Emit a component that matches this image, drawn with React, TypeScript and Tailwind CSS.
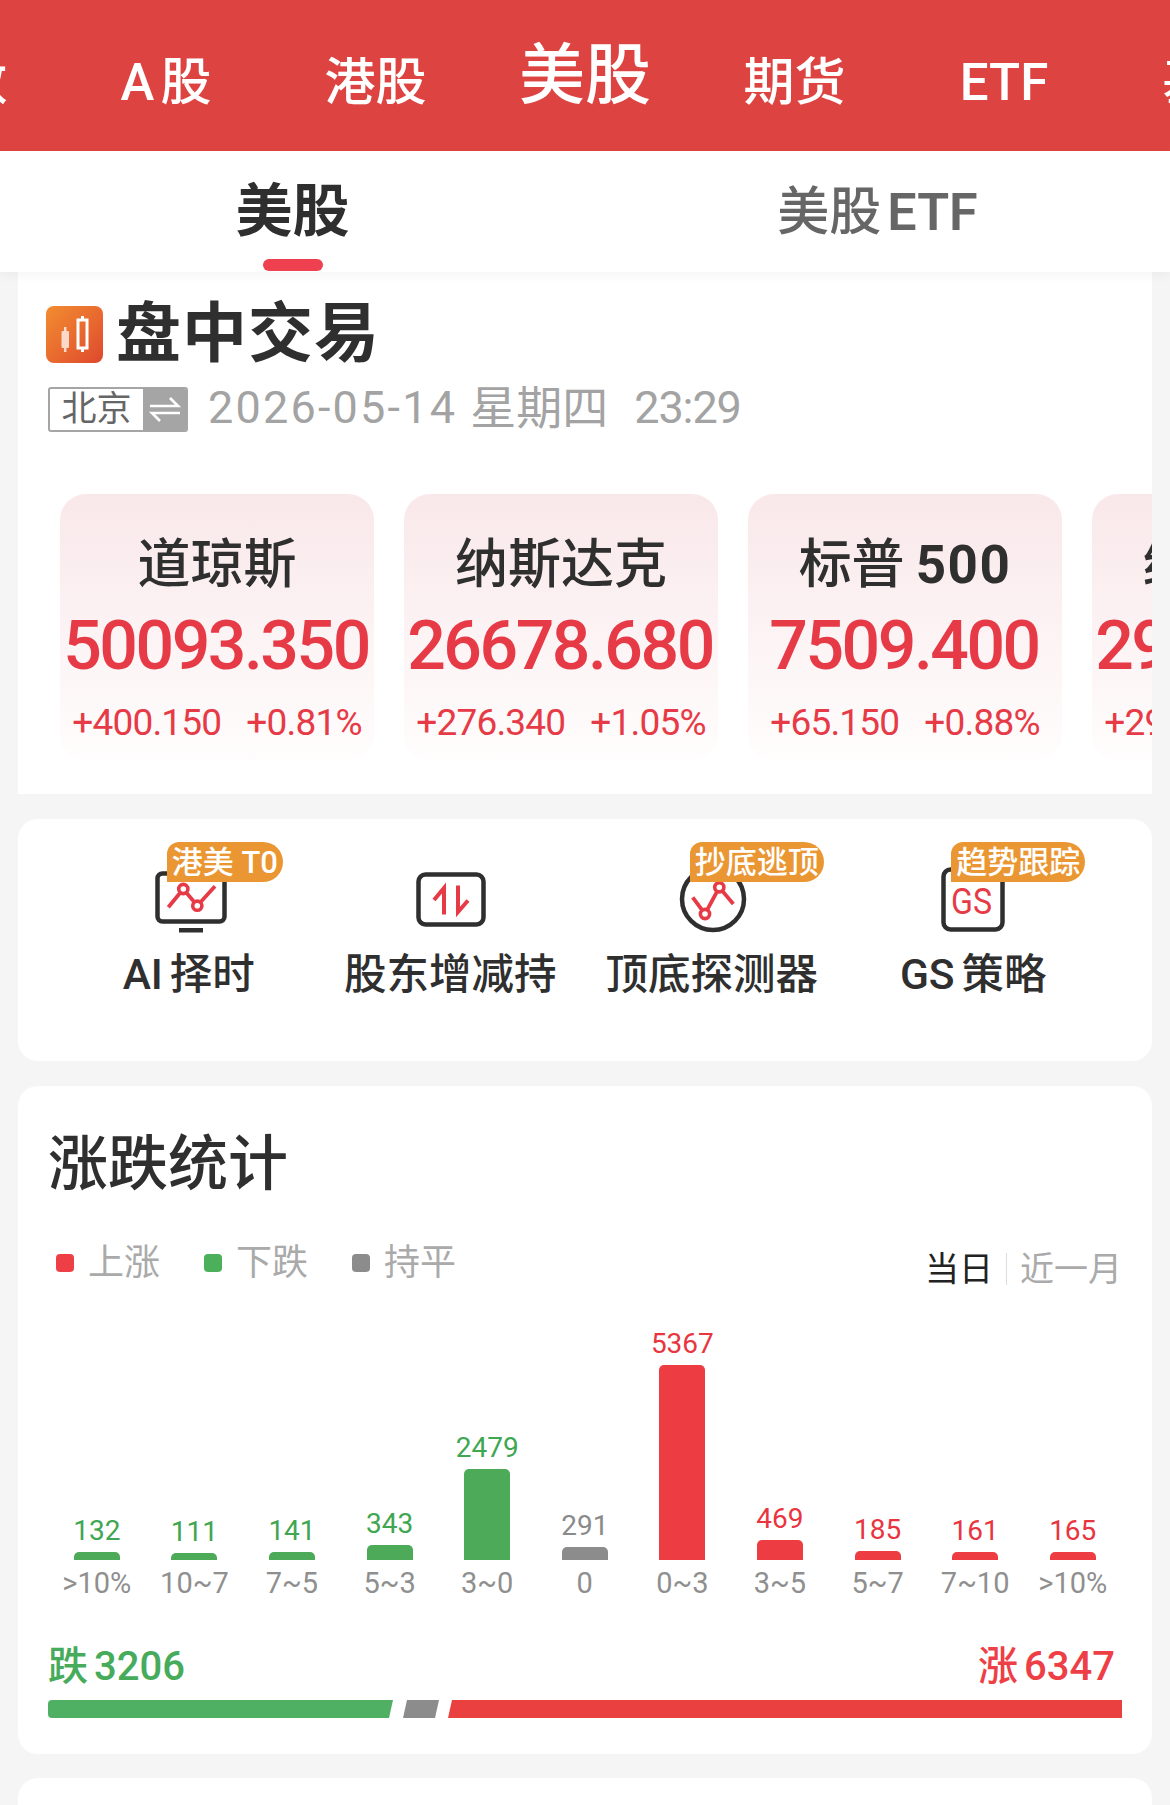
import React from "react";

const FONT = "font-['Roboto','Noto_Sans_CJK_SC',sans-serif]";
const RED = "#e63b47";
const DARK = "#2f2f2f";

const navItems = ["指数", "A股", "港股", "美股", "期货", "ETF", "基金"];

const indices = [
  { name: "道琼斯", latin: "", value: "50093.350", change: "+400.150", pct: "+0.81%" },
  { name: "纳斯达克", latin: "", value: "26678.680", change: "+276.340", pct: "+1.05%" },
  { name: "标普", latin: "500", value: "7509.400", change: "+65.150", pct: "+0.88%" },
  { name: "纳指", latin: "100", value: "29178.350", change: "+290.150", pct: "+1.00%" },
];

const bars = [
  { v: 132, h: 8, l: ">10%", c: "g" },
  { v: 111, h: 7, l: "10~7", c: "g" },
  { v: 141, h: 8, l: "7~5", c: "g" },
  { v: 343, h: 15, l: "5~3", c: "g" },
  { v: 2479, h: 91, l: "3~0", c: "g" },
  { v: 291, h: 13, l: "0", c: "n" },
  { v: 5367, h: 195, l: "0~3", c: "r" },
  { v: 469, h: 20, l: "3~5", c: "r" },
  { v: 185, h: 9, l: "5~7", c: "r" },
  { v: 161, h: 8, l: "7~10", c: "r" },
  { v: 165, h: 8, l: ">10%", c: "r" },
];

function Svg({ children }: { children: React.ReactNode }) {
  return (
    <svg width="80" height="70" viewBox="0 0 80 70" fill="none" className="block">
      {children}
    </svg>
  );
}

function Dot({ x, y }: { x: number; y: number }) {
  return <circle cx={x} cy={y} r="4.6" fill="#fff" stroke={RED} strokeWidth="3.6" />;
}

function MonitorIcon() {
  return (
    <Svg>
      <rect x="8.5" y="9.5" width="67" height="48" rx="5" stroke={DARK} strokeWidth="4.5" />
      <rect x="30" y="64" width="24" height="4.5" fill={DARK} />
      <polyline points="19.3,43.3 34.3,25 48.3,41.7 66,22.3" stroke={RED} strokeWidth="3.8" />
      <Dot x={34.3} y={25} />
      <Dot x={48.3} y={41.7} />
    </Svg>
  );
}

function SwapIcon() {
  return (
    <Svg>
      <rect x="8.5" y="10.5" width="65" height="50" rx="7" stroke={DARK} strokeWidth="4.5" />
      <polyline points="34,50.5 34,24 24,36" stroke={RED} strokeWidth="4" />
      <polyline points="48,21.5 48,48 58,36.5" stroke={RED} strokeWidth="4" />
    </Svg>
  );
}

function CircleIcon() {
  return (
    <Svg>
      <circle cx="41" cy="35" r="31" stroke={DARK} strokeWidth="4.5" />
      <polyline points="20.7,33.3 33,50 47.3,23.3 61.3,40" stroke={RED} strokeWidth="3.8" />
      <Dot x={33} y={50} />
      <Dot x={47.3} y={23.3} />
    </Svg>
  );
}

function GsIcon() {
  return (
    <Svg>
      <rect x="10.5" y="5.5" width="59" height="60" rx="7" stroke={DARK} strokeWidth="4.5" />
      <text
        x="18"
        y="50"
        fontSize="37"
        textLength={41}
        lengthAdjust="spacingAndGlyphs"
        fill={RED}
        fontFamily="Roboto, sans-serif"
      >
        GS
      </text>
    </Svg>
  );
}

const tools = [
  { latin: "AI", label: "择时", badge: "港美 T0", icon: <MonitorIcon /> },
  { latin: "", label: "股东增减持", badge: "", icon: <SwapIcon /> },
  { latin: "", label: "顶底探测器", badge: "抄底逃顶", icon: <CircleIcon /> },
  { latin: "GS", label: "策略", badge: "趋势跟踪", icon: <GsIcon /> },
];

function CandleLogo() {
  return (
    <div className="flex h-[57px] w-[57px] items-center justify-center rounded-[8px] bg-gradient-to-br from-[#f28c30] to-[#de472d]">
      <svg width="57" height="57" viewBox="0 0 57 57" fill="none">
        <rect x="15.5" y="25" width="7.5" height="17" rx="1" fill="#fbd9c8" />
        <path d="M19.2 21v25" stroke="#fbd9c8" strokeWidth="2.5" />
        <rect x="32" y="14" width="9" height="28" stroke="#fff" strokeWidth="3" />
        <path d="M36.5 10v4M36.5 42v4" stroke="#fff" strokeWidth="3" />
      </svg>
    </div>
  );
}

function IndexCard({ name, latin, value, change, pct }: (typeof indices)[number]) {
  return (
    <div className="flex h-[267px] w-[314px] shrink-0 flex-col items-center rounded-[26px] bg-gradient-to-b from-[#f9e8ea] to-[#fffdfd]">
      <div className="mt-[39px] flex h-[64px] items-center whitespace-nowrap text-[53px] leading-[64px] font-medium text-[#2f2f2f]">
        <span>{name}</span>
        {latin && <span className="ml-[11px] font-bold tracking-[1.5px]">{latin}</span>}
      </div>
      <div className="mt-[14px] h-[70px] -translate-x-[1px] whitespace-nowrap text-[68px] leading-[70px] font-medium tracking-[-2.5px] text-[#e63b47]">{value}</div>
      <div className="mt-[20px] flex h-[44px] items-center gap-[25px] whitespace-nowrap text-[37px] leading-[44px] tracking-[-0.8px] text-[#e63b47]">
        <span>{change}</span>
        <span>{pct}</span>
      </div>
    </div>
  );
}

export default function App() {
  return (
    <div className={`${FONT} h-[1805px] w-[1170px] overflow-hidden bg-[#f5f5f5]`}>
      <div className="flex h-[151px] items-center justify-center overflow-hidden bg-[#dd4340] pt-[15px] text-white">
        {navItems.map((t) => (
          <div
            key={t}
            className={
              t === "美股"
                ? "w-[209.5px] shrink-0 -translate-y-[7px] text-center text-[66px] leading-[80px] font-medium"
                : "w-[209.5px] shrink-0 text-center text-[51px] leading-[60px] font-medium"
            }
          >
            {t === "A股" ? (
              <>
                A<span className="ml-[6px]">股</span>
              </>
            ) : (
              t
            )}
          </div>
        ))}
      </div>

      <div className="relative z-10 grid h-[121px] grid-cols-2 bg-white shadow-[0_4px_10px_rgba(0,0,0,0.04)]">
        <div className="flex flex-col items-center">
          <div className="mt-[28px] text-[57px] leading-[66px] font-semibold text-[#2f2f2f]">美股</div>
          <div className="mt-auto mb-px h-[12px] w-[60px] rounded-[7px] bg-[#ef4050]" />
        </div>
        <div className="flex flex-col items-center">
          <div className="mt-[32px] flex text-[52px] leading-[60px] font-medium text-[#666666]">
            <span>美股</span>
            <span className="ml-[6px] font-semibold">ETF</span>
          </div>
        </div>
      </div>

      <div className="mx-[18px] h-[522px] overflow-hidden bg-white">
        <div className="flex items-center pt-[30px] pl-[28px]">
          <CandleLogo />
          <div className="ml-[13px] text-[65px] leading-[64px] font-semibold tracking-[1px] text-[#2f2f2f]">盘中交易</div>
        </div>
        <div className="mt-[18px] flex items-center pl-[30px]">
          <div className="flex h-[45px] w-[140px] overflow-hidden rounded-[3px] border-2 border-[#a5a5a5]">
            <div className="flex w-[93px] items-center justify-center text-[35px] leading-none text-[#666666]">北京</div>
            <div className="flex flex-1 items-center justify-center bg-[#a5a5a5]">
              <svg width="34" height="28" viewBox="0 0 34 28" fill="none" stroke="#fff" strokeWidth="2.6">
                <path d="M2 11h28L22 3" />
                <path d="M32 18H4l8 8" />
              </svg>
            </div>
          </div>
          <div className="ml-[20px] flex h-[50px] -translate-y-[1px] items-center text-[45px] leading-[50px] whitespace-nowrap text-[#a3a3a3]">
            <span className="tracking-[2.2px]">2026-05-14</span>
            <span className="ml-[13px] text-[46px]">星期四</span>
            <span className="ml-[26px] tracking-[-1.1px]">23:29</span>
          </div>
        </div>
        <div className="mt-[60px] flex gap-[30px] pl-[42px]">
          {indices.map((i) => (
            <IndexCard key={i.name} {...i} />
          ))}
        </div>
      </div>

      <div className="mx-[18px] mt-[25px] grid h-[242px] grid-cols-4 rounded-[20px] bg-white pt-[23px] pr-[48px] pl-[40px]">
        {tools.map((t) => (
          <div key={t.label} className="relative flex flex-col items-center">
            <div className="mt-[22px]">{t.icon}</div>
            {t.badge && (
              <div className="absolute top-0 left-[calc(50%-22px)] flex h-[40px] items-center rounded-tl-[12px] rounded-tr-[20px] rounded-br-[20px] bg-[#ea9632] px-[5px] text-[31px] leading-none font-medium whitespace-nowrap text-white">
                {t.badge}
              </div>
            )}
            <div className="mt-[13px] flex text-[42.5px] leading-[56px] font-medium whitespace-nowrap text-[#2f2f2f]">
              {t.latin && <span className="mr-[7px]">{t.latin}</span>}
              <span>{t.label}</span>
            </div>
          </div>
        ))}
      </div>

      <div className="mx-[18px] mt-[25px] h-[668px] rounded-[20px] bg-white px-[30px]">
        <div className="pt-[44px] text-[60px] leading-[70px] font-medium text-[#2f2f2f]">涨跌统计</div>
        <div className="mt-[39px] flex items-start justify-between">
          <div className="flex gap-[44px] pl-[8px] text-[36px] leading-[48px] text-[#aaaaaa]">
            {[
              ["上涨", "bg-[#ee3f47]"],
              ["下跌", "bg-[#4caf5a]"],
              ["持平", "bg-[#8c8c8c]"],
            ].map(([t, c]) => (
              <div key={t} className="flex items-center gap-[14px]">
                <span className={`h-[18px] w-[18px] rounded-[4px] ${c}`} />
                {t}
              </div>
            ))}
          </div>
          <div className="mt-[6px] flex items-center text-[34px] leading-[48px]">
            <span className="text-[#222222]">当日</span>
            <span className="mx-[13px] h-[32px] w-px bg-[#dddddd]" />
            <span className="text-[#aaaaaa]">近一月</span>
          </div>
        </div>

        <div className="mt-[7px] flex w-[1074px]">
          {bars.map((b, i) => (
            <div key={i} className="flex h-[300px] w-[97.6px] shrink-0 flex-col items-center justify-end">
              <div
                className={
                  "text-[28px] leading-[34px] " +
                  (b.c === "g" ? "text-[#3fa652]" : b.c === "r" ? "text-[#e8353f]" : "text-[#8a8a8a]")
                }
              >
                {b.v}
              </div>
              <div
                style={{ height: b.h }}
                className={
                  "mt-[4px] w-[46px] rounded-t-[5px] " +
                  (b.c === "g" ? "bg-[#4caa58]" : b.c === "r" ? "bg-[#ee3c43]" : "bg-[#8c8c8c]")
                }
              />
              <div className="mt-[6px] h-[34px] text-[29px] leading-[34px] whitespace-nowrap text-[#8f8f8f]">{b.l}</div>
            </div>
          ))}
        </div>

        <div className="mt-[42px] flex items-center justify-between pr-[7px] text-[40px] leading-[50px] font-medium">
          <span className="flex text-[#46ab5b]">
            跌<span className="ml-[6px]">3206</span>
          </span>
          <span className="flex text-[#ee3f47]">
            涨<span className="ml-[6px]">6347</span>
          </span>
        </div>
        <div className="mt-[8px] flex h-[18px]">
          <div className="w-[345px] rounded-l-[4px] bg-[#4fb063] [clip-path:polygon(0_0,100%_0,calc(100%-4px)_100%,0_100%)]" />
          <div className="ml-[10px] w-[36px] bg-[#8c8c8c] [clip-path:polygon(4px_0,100%_0,calc(100%-4px)_100%,0_100%)]" />
          <div className="ml-[9px] flex-1 bg-[#ea4140] [clip-path:polygon(4px_0,100%_0,100%_100%,0_100%)]" />
        </div>
      </div>

      <div className="mx-[18px] mt-[24px] h-[60px] rounded-t-[20px] bg-white" />
    </div>
  );
}
